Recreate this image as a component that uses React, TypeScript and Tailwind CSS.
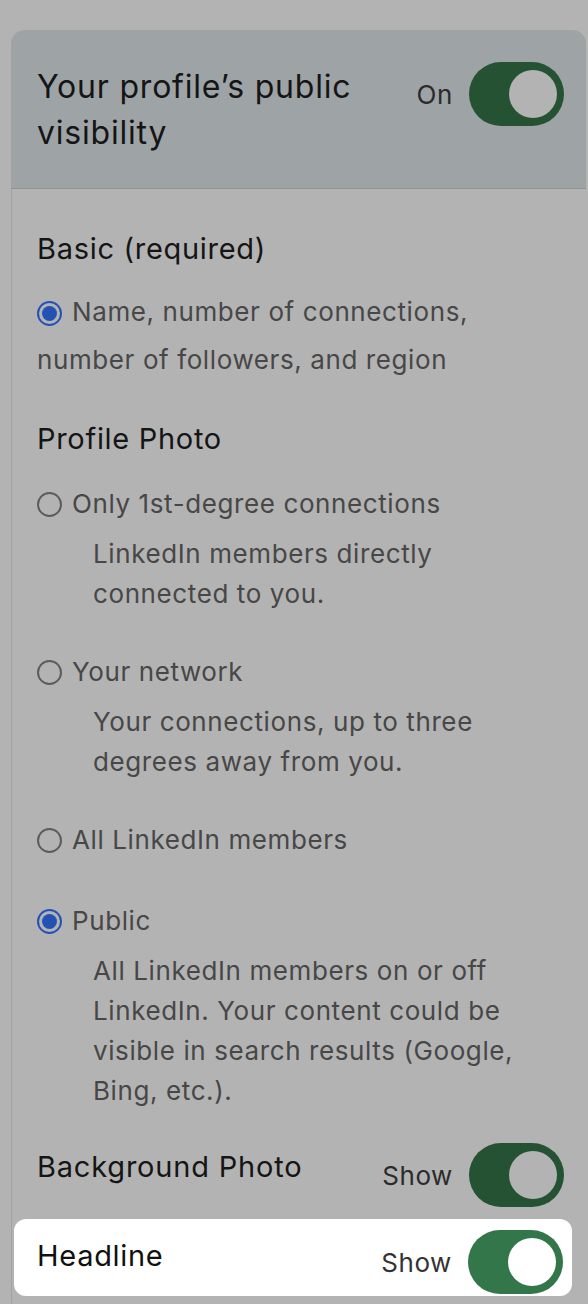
import React from "react";

type Option = {
  label: string;
  description?: string[];
  selected?: boolean;
};

const photoOptions: Option[] = [
  {
    label: "Only 1st-degree connections",
    description: ["LinkedIn members directly", "connected to you."],
  },
  {
    label: "Your network",
    description: ["Your connections, up to three", "degrees away from you."],
  },
  { label: "All LinkedIn members" },
  {
    label: "Public",
    selected: true,
    description: [
      "All LinkedIn members on or off",
      "LinkedIn. Your content could be",
      "visible in search results (Google,",
      "Bing, etc.).",
    ],
  },
];

function Radio({ selected }: { selected?: boolean }) {
  return selected ? (
    <span className="flex h-[25px] w-[25px] shrink-0 items-center justify-center rounded-full border-[2.5px] border-[#2452b4]">
      <span className="h-[15px] w-[15px] rounded-full bg-[#2452b4]" />
    </span>
  ) : (
    <span className="h-[25px] w-[25px] shrink-0 rounded-full border-2 border-[#5c5c5c]" />
  );
}

function Toggle({ bright }: { bright?: boolean }) {
  return (
    <span
      className={`flex h-16 w-[95px] shrink-0 items-center justify-end rounded-full pr-[7px] ${
        bright ? "bg-[#33764a]" : "bg-[#245232]"
      }`}
    >
      <span
        className={`h-12 w-12 rounded-full ${bright ? "bg-white" : "bg-[#b3b3b3]"}`}
      />
    </span>
  );
}

export default function App() {
  return (
    <div
      className="min-h-[1304px] bg-[#b3b3b3] pl-[11px] pt-[30px]"
      style={{ fontFamily: "Inter, 'Noto Sans', sans-serif" }}
    >
      <div className="mr-[2px]">
        {/* header */}
        <div className="flex items-start justify-between rounded-t-[14px] border-b border-[#8f9497] bg-[#9ea3a6] pb-[32px] pl-[26px] pr-[22px] pt-[34px]">
          <h1 className="text-[32px] leading-[46px] tracking-[0.8px] text-[#151515]">
            Your profile’s public
            <br />
            visibility
          </h1>
          <div className="mt-[-2px] flex items-center gap-[16px]">
            <span className="text-[26px] tracking-[0.6px] text-[#2b2b2b]">On</span>
            <Toggle />
          </div>
        </div>

        {/* body */}
        <div className="border-l border-[#a2a2a2] pb-[10px] pt-[40px]">
          <div className="pl-[25px] pr-[22px]">
            <h2 className="text-[29px] leading-10 tracking-[0.7px] text-[#151515]">
              Basic (required)
            </h2>
            <div className="mt-[19px] text-[26px] leading-[48px] tracking-[0.6px] text-[#474747]">
              <span className="mr-[10px] inline-flex align-baseline">
                <Radio selected />
              </span>
              Name, number of connections,
              <br />
              number of followers, and region
            </div>

            <h2 className="mt-[35px] text-[29px] leading-10 tracking-[0.7px] text-[#151515]">
              Profile Photo
            </h2>

            <div className="mt-[25px] flex flex-col gap-[38px]">
              {photoOptions.map((o) => (
                <div key={o.label} className={o.selected ? "mt-[3px]" : ""}>
                  <div className="flex items-center gap-[10px] text-[26px] leading-10 tracking-[0.6px] text-[#474747]">
                    <Radio selected={o.selected} />
                    <span>{o.label}</span>
                  </div>
                  {o.description && (
                    <p className="mt-[10px] pl-[56px] text-[26px] leading-10 tracking-[0.6px] text-[#474747]">
                      {o.description.map((line, i) => (
                        <React.Fragment key={i}>
                          {line}
                          {i < o.description!.length - 1 && <br />}
                        </React.Fragment>
                      ))}
                    </p>
                  )}
                </div>
              ))}
            </div>

            <div className="mt-[32px] flex items-start justify-between">
              <span className="mt-[4px] text-[29px] leading-10 tracking-[0.8px] text-[#151515]">
                Background Photo
              </span>
              <div className="flex items-center gap-[16px]">
                <span className="text-[26px] tracking-[0.6px] text-[#2b2b2b]">Show</span>
                <Toggle />
              </div>
            </div>
          </div>

          <div className="ml-[2px] mr-[14px] mt-[12px] flex items-start justify-between rounded-[12px] bg-white pl-[23px] pr-[9px] pt-[11px] pb-[2px]">
            <span className="mt-[6px] text-[29px] leading-10 tracking-[0.7px] text-[#111]">
              Headline
            </span>
            <div className="flex items-center gap-[16px]">
              <span className="text-[26px] tracking-[0.6px] text-[#333]">Show</span>
              <Toggle bright />
            </div>
          </div>
        </div>
      </div>
    </div>
  );
}
